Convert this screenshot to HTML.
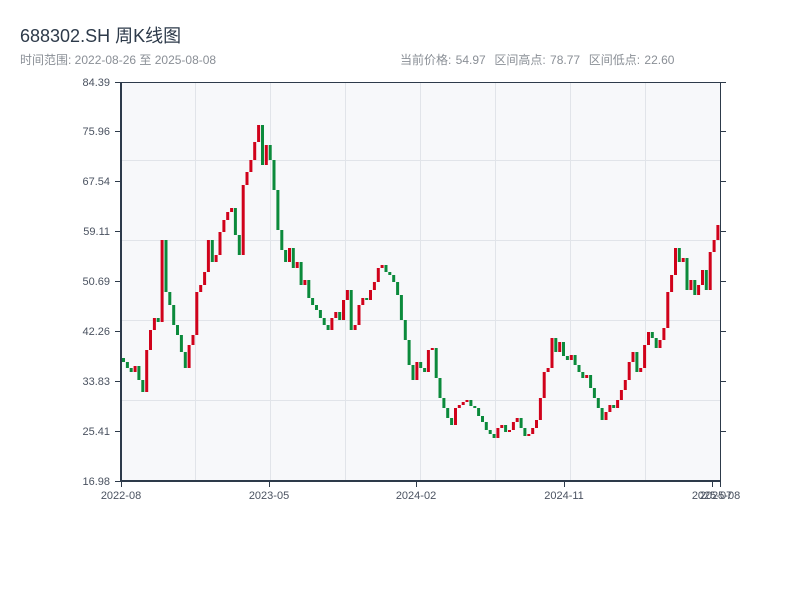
<!DOCTYPE html>
<html><head><meta charset="utf-8"><style>
body{margin:0;width:800px;height:600px;background:#fff;overflow:hidden;font-family:"Liberation Sans","Noto Sans CJK SC",sans-serif;position:relative}
.t{position:absolute;left:20px;top:22px;font-size:18px;color:#2d3a4a}
.s{position:absolute;left:20px;top:51px;font-size:12px;color:#8a8f96}
.r{position:absolute;left:400px;top:51px;font-size:12px;color:#8a8f96;word-spacing:1px}
svg{position:absolute;left:0;top:0}
</style></head><body>
<div class="t">688302.SH 周K线图</div>
<div class="s">时间范围: 2022-08-26 至 2025-08-08</div>
<div class="r">当前价格: 54.97&nbsp;&nbsp;区间高点: 78.77&nbsp;&nbsp;区间低点: 22.60</div>
<svg width="800" height="600" xmlns="http://www.w3.org/2000/svg" font-family="Liberation Sans, sans-serif" font-size="11" fill="#4a5260">
<rect x="121" y="82" width="599" height="399" fill="#f7f8fa"/>
<g stroke="#e1e4e9" stroke-width="1">
<line x1="121" y1="160.5" x2="720" y2="160.5"/><line x1="121" y1="240.5" x2="720" y2="240.5"/><line x1="121" y1="320.5" x2="720" y2="320.5"/><line x1="121" y1="400.5" x2="720" y2="400.5"/>
<line x1="195.5" y1="82" x2="195.5" y2="481"/><line x1="270.5" y1="82" x2="270.5" y2="481"/><line x1="345.5" y1="82" x2="345.5" y2="481"/><line x1="420.5" y1="82" x2="420.5" y2="481"/><line x1="495.5" y1="82" x2="495.5" y2="481"/><line x1="570.5" y1="82" x2="570.5" y2="481"/><line x1="645.5" y1="82" x2="645.5" y2="481"/>
</g>
<path fill="#d0021b" d="M133.6 366h3v6h-3zM145.2 350h3v42h-3zM149 330h3v20h-3zM152.9 318h3v12h-3zM160.6 240h3v82h-3zM187.6 345h3v23h-3zM191.5 335h3v10h-3zM195.3 292h3v43h-3zM199.2 285h3v7h-3zM203.1 272h3v13h-3zM206.9 240h3v32h-3zM214.6 255h3v7h-3zM218.5 232h3v23h-3zM222.4 220h3v12h-3zM226.2 212h3v8h-3zM230.1 208h3v4h-3zM241.7 185h3v70h-3zM245.5 172h3v13h-3zM249.4 160h3v12h-3zM253.2 142h3v18h-3zM257.1 125h3v17h-3zM264.8 145h3v20h-3zM288 248h3v14h-3zM295.7 262h3v6h-3zM303.4 280h3v5h-3zM330.4 318h3v12h-3zM334.3 312h3v6h-3zM342 300h3v20h-3zM345.9 290h3v10h-3zM353.6 325h3v5h-3zM357.5 305h3v20h-3zM361.3 298h3v7h-3zM369 290h3v10h-3zM372.9 282h3v8h-3zM376.8 268h3v14h-3zM380.6 265h3v3h-3zM415.4 362h3v18h-3zM426.9 350h3v22h-3zM430.8 348h3v2h-3zM454 408h3v17h-3zM457.8 405h3v3h-3zM461.7 402h3v3h-3zM465.5 400h3v2h-3zM496.4 428h3v10h-3zM500.3 425h3v3h-3zM508 430h3v2h-3zM511.9 422h3v8h-3zM515.7 418h3v4h-3zM527.3 434h3v2h-3zM531.2 428h3v6h-3zM535 420h3v8h-3zM538.9 398h3v22h-3zM542.7 372h3v26h-3zM546.6 368h3v4h-3zM550.5 338h3v30h-3zM558.2 342h3v10h-3zM569.8 355h3v5h-3zM585.2 375h3v3h-3zM604.5 412h3v8h-3zM608.4 405h3v7h-3zM616.1 400h3v8h-3zM619.9 390h3v10h-3zM623.8 380h3v10h-3zM627.7 362h3v18h-3zM631.5 352h3v10h-3zM639.2 368h3v4h-3zM643.1 345h3v23h-3zM647 332h3v13h-3zM658.5 340h3v8h-3zM662.4 328h3v12h-3zM666.3 292h3v36h-3zM670.1 275h3v17h-3zM674 248h3v27h-3zM681.7 258h3v4h-3zM689.4 280h3v10h-3zM697.1 285h3v10h-3zM701 270h3v15h-3zM708.7 252h3v38h-3zM712.6 240h3v12h-3zM716.4 225h3v15h-3z"/>
<path fill="#0b8a3b" d="M122 358h3v4h-3zM125.9 362h3v6h-3zM129.7 368h3v4h-3zM137.4 366h3v14h-3zM141.3 380h3v12h-3zM156.7 318h3v4h-3zM164.5 240h3v52h-3zM168.3 292h3v13h-3zM172.2 305h3v20h-3zM176 325h3v10h-3zM179.9 335h3v17h-3zM183.8 352h3v16h-3zM210.8 240h3v22h-3zM233.9 208h3v27h-3zM237.8 235h3v20h-3zM261 125h3v40h-3zM268.7 145h3v15h-3zM272.5 160h3v30h-3zM276.4 190h3v40h-3zM280.3 230h3v20h-3zM284.1 250h3v12h-3zM291.8 248h3v20h-3zM299.6 262h3v23h-3zM307.3 280h3v18h-3zM311.1 298h3v7h-3zM315 305h3v5h-3zM318.9 310h3v8h-3zM322.7 318h3v7h-3zM326.6 325h3v5h-3zM338.2 312h3v8h-3zM349.7 290h3v40h-3zM365.2 298h3v2h-3zM384.5 265h3v7h-3zM388.3 272h3v3h-3zM392.2 275h3v7h-3zM396.1 282h3v13h-3zM399.9 295h3v25h-3zM403.8 320h3v20h-3zM407.6 340h3v25h-3zM411.5 365h3v15h-3zM419.2 362h3v6h-3zM423.1 368h3v4h-3zM434.7 348h3v30h-3zM438.5 378h3v20h-3zM442.4 398h3v10h-3zM446.2 408h3v10h-3zM450.1 418h3v7h-3zM469.4 400h3v6h-3zM473.3 406h3v2h-3zM477.1 408h3v8h-3zM481 416h3v6h-3zM484.8 422h3v8h-3zM488.7 430h3v4h-3zM492.6 434h3v4h-3zM504.1 425h3v7h-3zM519.6 418h3v10h-3zM523.4 428h3v8h-3zM554.3 338h3v14h-3zM562 342h3v14h-3zM565.9 356h3v4h-3zM573.6 355h3v10h-3zM577.5 365h3v7h-3zM581.3 372h3v6h-3zM589.1 375h3v13h-3zM592.9 388h3v10h-3zM596.8 398h3v10h-3zM600.6 408h3v12h-3zM612.2 405h3v3h-3zM635.4 352h3v20h-3zM650.8 332h3v6h-3zM654.7 338h3v10h-3zM677.8 248h3v14h-3zM685.5 258h3v32h-3zM693.3 280h3v15h-3zM704.8 270h3v20h-3z"/>
<g stroke="#2d3a4a">
<line x1="121" y1="82" x2="121" y2="482" stroke-width="2"/>
<line x1="120" y1="481" x2="721" y2="481" stroke-width="2"/>
<line x1="121" y1="82.5" x2="720" y2="82.5" stroke-width="1"/>
<line x1="720.5" y1="82" x2="720.5" y2="481" stroke-width="1"/>
<g stroke-width="1">
<line x1="115" y1="82.5" x2="121" y2="82.5"/><line x1="115" y1="131.5" x2="121" y2="131.5"/><line x1="115" y1="181.5" x2="121" y2="181.5"/><line x1="115" y1="231.5" x2="121" y2="231.5"/><line x1="115" y1="281.5" x2="121" y2="281.5"/><line x1="115" y1="331.5" x2="121" y2="331.5"/><line x1="115" y1="381.5" x2="121" y2="381.5"/><line x1="115" y1="431.5" x2="121" y2="431.5"/><line x1="115" y1="481.5" x2="121" y2="481.5"/>
<line x1="720" y1="82.5" x2="726" y2="82.5"/><line x1="720" y1="131.5" x2="726" y2="131.5"/><line x1="720" y1="181.5" x2="726" y2="181.5"/><line x1="720" y1="231.5" x2="726" y2="231.5"/><line x1="720" y1="281.5" x2="726" y2="281.5"/><line x1="720" y1="331.5" x2="726" y2="331.5"/><line x1="720" y1="381.5" x2="726" y2="381.5"/><line x1="720" y1="431.5" x2="726" y2="431.5"/>
<line x1="121.5" y1="481" x2="121.5" y2="487"/><line x1="269.5" y1="481" x2="269.5" y2="487"/><line x1="416.5" y1="481" x2="416.5" y2="487"/><line x1="564.5" y1="481" x2="564.5" y2="487"/><line x1="712.5" y1="481" x2="712.5" y2="487"/><line x1="720.5" y1="481" x2="720.5" y2="487"/>
</g></g>
<g text-anchor="end">
<text x="110" y="86">84.39</text><text x="110" y="135">75.96</text><text x="110" y="185">67.54</text><text x="110" y="235">59.11</text><text x="110" y="285">50.69</text><text x="110" y="335">42.26</text><text x="110" y="385">33.83</text><text x="110" y="435">25.41</text><text x="110" y="485">16.98</text>
</g>
<g text-anchor="middle">
<text x="121" y="499">2022-08</text><text x="269" y="499">2023-05</text><text x="416" y="499">2024-02</text><text x="564" y="499">2024-11</text><text x="712" y="499">2025-07</text><text x="720" y="499">2025-08</text>
</g>
</svg>
</body></html>
